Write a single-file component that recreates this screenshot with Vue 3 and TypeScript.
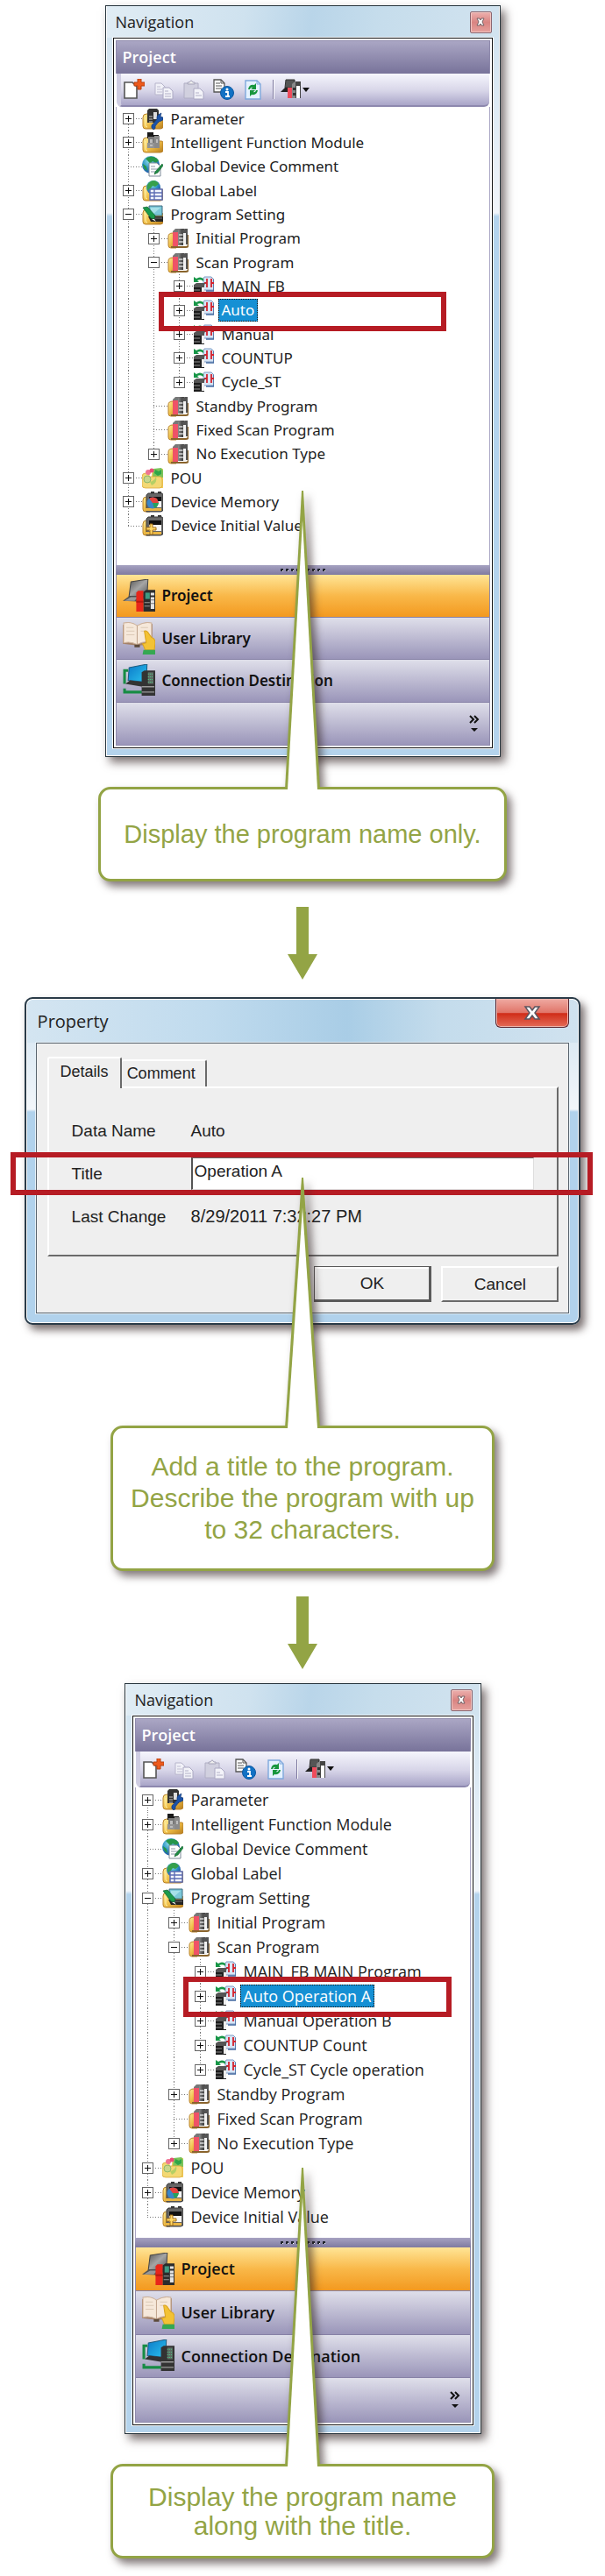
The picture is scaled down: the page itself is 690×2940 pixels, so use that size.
<script setup lang="ts">
interface TreeRow {
  label: string
  icon: string
  depth: number
  toggle?: '+' | '-'
  first?: boolean
  last?: boolean
  selected?: boolean
}

interface Step {
  id: string
  kind: 'navigation' | 'property'
  rows: TreeRow[]
  lines: string[]
  pointer: number
}

function buildRows(titles: string[], standbyToggle?: '+'): TreeRow[] {
  const programs: TreeRow[] = titles.map((label, i) => ({
    label,
    icon: 'program',
    depth: 2,
    toggle: '+',
    selected: i === 1,
    last: i === titles.length - 1,
  }))
  return [
    { label: 'Parameter', icon: 'parameter', depth: 0, toggle: '+', first: true },
    { label: 'Intelligent Function Module', icon: 'module', depth: 0, toggle: '+' },
    { label: 'Global Device Comment', icon: 'comment', depth: 0 },
    { label: 'Global Label', icon: 'label', depth: 0, toggle: '+' },
    { label: 'Program Setting', icon: 'setting', depth: 0, toggle: '-' },
    { label: 'Initial Program', icon: 'books', depth: 1, toggle: '+' },
    { label: 'Scan Program', icon: 'books', depth: 1, toggle: '-' },
    ...programs,
    { label: 'Standby Program', icon: 'books', depth: 1, toggle: standbyToggle },
    { label: 'Fixed Scan Program', icon: 'books', depth: 1 },
    { label: 'No Execution Type', icon: 'books', depth: 1, toggle: '+', last: true },
    { label: 'POU', icon: 'pou', depth: 0, toggle: '+' },
    { label: 'Device Memory', icon: 'memory', depth: 0, toggle: '+' },
    { label: 'Device Initial Value', icon: 'initial', depth: 0, last: true },
  ]
}

const steps: Step[] = [
  {
    id: 'before',
    kind: 'navigation',
    rows: buildRows(['MAIN_FB', 'Auto', 'Manual', 'COUNTUP', 'Cycle_ST']),
    lines: ['Display the program name only.'],
    pointer: 341,
  },
  {
    id: 'edit',
    kind: 'property',
    rows: [],
    lines: ['Add a title to the program.', 'Describe the program with up', 'to 32 characters.'],
    pointer: 286,
  },
  {
    id: 'after',
    kind: 'navigation',
    rows: buildRows(
      ['MAIN_FB MAIN Program', 'Auto Operation A', 'Manual Operation B', 'COUNTUP Count', 'Cycle_ST Cycle operation'],
      '+',
    ),
    lines: ['Display the program name', 'along with the title.'],
    pointer: 341,
  },
]

const tools = [
  { icon: 'new', name: 'New' },
  { icon: 'copy', name: 'Copy' },
  { icon: 'paste', name: 'Paste' },
  { icon: 'info', name: 'Property' },
  { icon: 'refresh', name: 'Refresh' },
]

const views = [
  { icon: 'nav-project', name: 'Project' },
  { icon: 'nav-library', name: 'User Library' },
  { icon: 'nav-connection', name: 'Connection Destination' },
]
</script>

<template>
  <svg class="sprite" aria-hidden="true">
    <defs>
      <linearGradient id="gold" x1="0" y1="0" x2="1" y2="1">
        <stop offset="0" stop-color="#fff0a0" /><stop offset=".5" stop-color="#f0c04a" /><stop offset="1" stop-color="#b87d1c" />
      </linearGradient>
      <linearGradient id="steel" x1="0" y1="0" x2="1" y2="0">
        <stop offset="0" stop-color="#8d8d8d" /><stop offset=".5" stop-color="#5a5a5a" /><stop offset="1" stop-color="#2e2e2e" />
      </linearGradient>
      <radialGradient id="globe" cx=".4" cy=".3" r=".8">
        <stop offset="0" stop-color="#8fe0e8" /><stop offset=".5" stop-color="#2a8fc4" /><stop offset="1" stop-color="#1b3f94" />
      </radialGradient>
      <linearGradient id="screen" x1="0" y1="0" x2="1" y2="1">
        <stop offset="0" stop-color="#0b78c8" /><stop offset="1" stop-color="#2cc4ee" />
      </linearGradient>
      <linearGradient id="lid" x1="0" y1="0" x2="1" y2="1">
        <stop offset="0" stop-color="#555" /><stop offset=".5" stop-color="#a5a5a5" /><stop offset="1" stop-color="#555" />
      </linearGradient>
      <symbol id="folder" viewBox="0 0 24 24">
        <path d="M1 10q0-4 4-4h3v4h14q2 0 2 2v8q0 3-3 3H4q-3 0-3-3z" fill="url(#gold)" stroke="#b9822a" />
        <path d="M4 10v9q0 2 2 2" fill="none" stroke="#fff2b0" />
      </symbol>
      <symbol id="parameter" viewBox="0 0 24 24">
        <use href="#folder" />
        <path d="M6 2l2-2h9l2 2v14H6z" fill="#333" />
        <path d="M8 9h4M8 12h4M8 15h4" stroke="#ccc" stroke-width="1" />
        <path d="M13 4h4v8h-4z" fill="#ddd" />
        <path d="M11 22q-1-4 2-5l4-5q-1-4 3-6l2-1-1 4 3 1q1 3-2 4l-3 1-4 5q1 3-2 4z" fill="#1b52a8" stroke="#123874" stroke-width=".6" />
      </symbol>
      <symbol id="module" viewBox="0 0 24 24">
        <use href="#folder" />
        <path d="M6 0h7v3h6v4H6z" fill="#181818" />
        <path d="M7 5h11v13H7z" fill="#777" />
        <path d="M6 12h8v6H6z" fill="#949494" /><path d="M14 4h6v14h-6z" fill="#8a8a8a" />
        <path d="M9 8h3v4H9zm7 0h2v4h-2zM9 14h3v2H9z" fill="#bdbdbd" />
      </symbol>
      <symbol id="comment" viewBox="0 0 24 24">
        <circle cx="10" cy="10" r="10" fill="url(#globe)" />
        <path d="M4 3q4-3 9-2 4 1 6 4l-3 3-4-2-3 3-2-3z" fill="#25964a" /><path d="M1 9l4 3 1 5Q1 14 1 9z" fill="#25964a" />
        <path d="M8 8h9l4 4v11H8z" fill="#fff" stroke="#7d8998" />
        <path d="M10 12h5M10 15h8M10 18h8" stroke="#8c98a8" />
        <path d="M23 9l-8 9-1 3 4-2 6-8z" fill="#1f8c44" stroke="#0e5c2a" stroke-width=".6" />
      </symbol>
      <symbol id="label" viewBox="0 0 24 24">
        <use href="#folder" />
        <circle cx="13" cy="8" r="8" fill="url(#globe)" />
        <path d="M6 5q3-5 8-5 4 1 5 4l-4 3-3-1-3 4-3 1z" fill="#35a04c" />
        <path d="M9 10h14v12H9z" fill="#f4f8ff" stroke="#5c6cb4" stroke-width="1.5" />
        <path d="M9 14h14M9 18h14M14 10v12" stroke="#5c6cb4" stroke-width="1.4" />
      </symbol>
      <symbol id="setting" viewBox="0 0 24 24">
        <use href="#folder" />
        <path d="M8 2h15v11H8z" fill="#7cc8d8" stroke="#3c6b80" />
        <path d="M10 4h11L12 12h-2z" fill="#a6e0e8" />
        <path d="M7 14h17v6H10z" fill="#252525" /><path d="M11 16h12" stroke="#777" />
        <path d="M1 4l5-1 9 10-1 4-4-1z" fill="#1a9a4c" stroke="#0b5e2c" stroke-width=".7" />
        <path d="M14 17l2 3-5-3z" fill="#eee" />
      </symbol>
      <symbol id="books" viewBox="0 0 24 24">
        <path d="M1 10q0-4 5-4h4v17H4q-3 0-3-3z" fill="url(#gold)" stroke="#b9822a" />
        <path d="M4 22h17q3 0 3-3V8" fill="none" stroke="#8a642c" stroke-width="2" />
        <path d="M6 4l3-3h5v19H6z" fill="#777" /><path d="M6 5h6v16H6z" fill="#ef5267" />
        <path d="M12 3l2-2h5v19h-7z" fill="url(#steel)" />
        <path d="M13 8h5M13 12h5M13 16h5" stroke="#d9d9d9" stroke-width="1.5" />
        <path d="M17 2l3-1h3v18h-5z" fill="#555" /><path d="M18 6h3v14h-3z" fill="#f2f2f2" />
      </symbol>
      <symbol id="program" viewBox="0 0 24 24">
        <path d="M13 1h8l3 3v12H12V3z" fill="#d7e5f5" stroke="#7d9ac4" />
        <path d="M24 4v13h-9" fill="none" stroke="#4168a0" stroke-width="1.5" />
        <path d="M13 8h3M21 8h3M16 3v10M21 3v10" stroke="#d3232f" stroke-width="1.800" />
        <path d="M1 1v6h6L5 5q4-2 7 1V3Q8 0 4 3z" fill="#179647" />
        <path d="M1 10l3-2h10l-1 3v12H1z" fill="#555" />
        <path d="M1 14h7M1 18h7M1 22h7" stroke="#1b1b1b" stroke-width="2" />
        <path d="M8 13h5v10H8z" fill="#222" /><path d="M10 13h3v9h-3z" fill="#eee" />
      </symbol>
      <symbol id="pou" viewBox="0 0 24 24">
        <path d="M12 1h12v22H9z" fill="#f4d05c" /><path d="M13 1l9-1 2 3v8H12z" fill="#7cc45a" />
        <path d="M15 2l4 2 3-2v5l-4 2-4-3z" fill="#2fa548" />
        <path d="M0 10q0-4 4-4h4v4h12q3 0 3 3v7q0 3-3 3H4q-4 0-4-3z" fill="#f3d873" stroke="#dda93c" stroke-width=".8" />
        <circle cx="7" cy="5" r="3" fill="#ef7594" /><circle cx="11" cy="3" r="2.500" fill="#e84d78" />
        <circle cx="6" cy="13" r="4" fill="#c8d68b" stroke="#8fb86b" /><path d="M9 16q5-1 7-6 2 7-5 10z" fill="#b4cf65" />
      </symbol>
      <symbol id="battery" viewBox="0 0 24 24">
        <path d="M1 10q0-4 4-4h4v17H4q-3 0-3-3z" fill="url(#gold)" stroke="#b9822a" />
        <path d="M10 0h4v3h-4zm8 0h4v3h-4z" fill="#333" />
        <path d="M7 2h16l1 2v16q0 3-3 3H5V4z" fill="#666" stroke="#3c3c3c" /><path d="M8 7h14v11H8z" fill="#f5f5f5" />
        <path d="M8 6h14v5H8z" fill="#111" /><path d="M3 19h19v3H4z" fill="#e9b544" />
      </symbol>
      <symbol id="memory" viewBox="0 0 24 24">
        <use href="#battery" />
        <circle cx="12" cy="13" r="6.500" fill="#3b86c8" />
        <path d="M12 13L8 8q4-3 9 0l2 5z" fill="#e2443e" /><path d="M12 13l7 0q-1 5-5 6z" fill="#29a15a" />
      </symbol>
      <symbol id="initial" viewBox="0 0 24 24">
        <use href="#battery" />
        <path d="M9 10h3v4h4v3h-4v5H9v-5H5v-3h4z" fill="#ffd866" stroke="#a36f18" />
      </symbol>
      <symbol id="new" viewBox="0 0 24 24">
        <path d="M1 4h9l5 5v13H1z" fill="#fff" stroke="#555" stroke-width="1.6" />
        <path d="M16 0h4v4h4v4h-4v4h-4V8h-4V4h4z" fill="#ee5a1c" stroke="#b8400e" />
      </symbol>
      <symbol id="copy" viewBox="0 0 24 24">
        <path d="M2 5h7l4 4v9H2z" fill="#f1f1f8" stroke="#b7b5cb" /><path d="M4 9h4M4 12h6M4 15h6" stroke="#bdbbd0" />
        <path d="M11 10h7l4 4v9H11z" fill="#f3f3f9" stroke="#aaa8c2" /><path d="M13 14h4M13 17h7M13 20h7" stroke="#b1afc6" />
      </symbol>
      <symbol id="paste" viewBox="0 0 24 24">
        <path d="M1 5h16v17H1z" fill="#d1d0df" stroke="#b0aec4" /><path d="M5 6V4h2q2-4 4 0h2v2z" fill="#eee" stroke="#a5a3b9" />
        <path d="M12 11h7l4 4v8H12z" fill="#f3f3f9" stroke="#aaa8c2" /><path d="M14 16h4M14 19h7" stroke="#b1afc6" />
      </symbol>
      <symbol id="info" viewBox="0 0 24 24">
        <path d="M1 1h8l4 4v10H1z" fill="#fff" stroke="#555" stroke-width="1.300" /><path d="M3 5h5M3 8h7M3 11h7M9 1v4h4" fill="none" stroke="#555" />
        <circle cx="16" cy="16" r="7.500" fill="#1271c4" stroke="#0d58a0" />
        <circle cx="16" cy="12" r="1.500" fill="#fff" /><path d="M14 15h3v5m-3 0h5" fill="none" stroke="#fff" stroke-width="1.800" />
      </symbol>
      <symbol id="refresh" viewBox="0 0 24 24">
        <path d="M3 2h13l4 4v17H3z" fill="#e4f1ff" stroke="#7fa8dc" stroke-width="1.400" /><path d="M16 2v4h4" fill="none" stroke="#7fa8dc" />
        <path d="M6 12q1-6 7-5l2-2v7H9l2-2q-2-1-3 2z" fill="#16963d" /><path d="M17 13q-1 6-7 5l-2 2v-7h6l-2 2q2 1 3-2z" fill="#16963d" />
      </symbol>
      <symbol id="plc" viewBox="0 0 24 24">
        <path d="M6 1h10v9H5z" fill="#555" stroke="#333" /><path d="M0 15l5-5h8v5z" fill="#222" />
        <path d="M8 10h5v12H8z" fill="#ee4c5c" /><path d="M13 6l2-2h5v18h-7z" fill="#888" />
        <path d="M14 10h3v3h-3zm0 6h3v3h-3z" fill="#333" /><path d="M17 3h6v19h-6z" fill="#444" /><path d="M18 8h4v14h-4z" fill="#fff" />
      </symbol>
      <symbol id="nav-project" viewBox="0 0 36 36">
        <path d="M9 3l19-3-1 19H7z" fill="url(#lid)" stroke="#444" /><path d="M0 24l7-5h17l-2 6z" fill="#555" /><path d="M2 24l7-4h8l-4 4z" fill="#999" />
        <path d="M15 15l2-2h6v23h-8z" fill="#e8261a" /><path d="M15 24h8v2h-8z" fill="#b81a10" />
        <path d="M23 14l3-2h10v24H23z" fill="#2c2c2c" /><path d="M25 15h5v7h-5z" fill="#3e9a82" /><path d="M24 26h6M24 30h6" stroke="#999" />
        <path d="M31 15h4v3h-4zm0 5h4v13h-4z" fill="#e4e4e4" /><path d="M31 23h4M31 27h4" stroke="#777" />
      </symbol>
      <symbol id="nav-library" viewBox="0 0 36 36">
        <path d="M0 3l16 3 17-4v23l-17 1-16-2z" fill="#a48168" />
        <path d="M1 1q9-2 15 3 8-5 16-3v21q-10-1-16 3-7-4-15-2z" fill="#f6e8da" stroke="#cdb29c" /><path d="M16 4v21" stroke="#c0a48c" />
        <path d="M4 6h8M4 10h9M4 14h9M20 6h8M20 10h6" stroke="#dcc9b6" /><path d="M13 25h6v3h-6z" fill="#5c4a3a" />
        <path d="M24 10q3-1 5 3l3 4q4 1 4 6l-1 8H25l-3-7 4-1z" fill="#f3c234" stroke="#dba41e" /><path d="M23 31h13v5H22z" fill="#35a852" />
      </symbol>
      <symbol id="nav-connection" viewBox="0 0 36 36">
        <path d="M6 7H2v15M2 27v4h21" fill="none" stroke="#178c44" stroke-width="3" />
        <path d="M7 4l20-4-1 20-20-2z" fill="url(#screen)" stroke="#1d5d80" /><path d="M3 22l5-4 16 2-2 5z" fill="#333" />
        <path d="M21 9l3-2h12v28H21z" fill="#333" /><path d="M28 9h6v13h-6z" fill="#5c6b62" />
        <path d="M28 11h6M28 14h6M28 17h6M28 20h6" stroke="#52c987" stroke-dasharray="1 1" />
        <path d="M21 25h14M21 31h14" stroke="#9a9a9a" stroke-width="1.400" />
      </symbol>
    </defs>
  </svg>

  <main class="page">
    <section v-for="(step, n) in steps" :key="step.id" class="step" :class="step.id">
      <div v-if="step.kind === 'navigation'" class="dock">
        <header class="dock-title">
          <span>Navigation</span>
          <button class="dock-close" type="button" aria-label="Close navigation">
            <svg viewBox="0 0 12 12" aria-hidden="true"><path d="M2 2h3l1 2 1-2h3L8 6l2 4H7L6 8l-1 2H2l2-4z" fill="#fff" stroke="#756064" /></svg>
          </button>
        </header>
        <div class="dock-body">
          <h2 class="heading">Project</h2>
          <div class="toolbar">
            <button v-for="tool in tools" :key="tool.icon" class="tool" type="button" :aria-label="tool.name">
              <svg aria-hidden="true"><use :href="'#' + tool.icon" /></svg>
            </button>
            <span class="divider"></span>
            <button class="tool view-tool" type="button" aria-label="Change view">
              <svg aria-hidden="true"><use href="#plc" /></svg>
              <span class="caret"></span>
            </button>
          </div>
          <ul class="tree">
            <li v-for="row in step.rows" :key="row.label" class="row">
              <span v-for="d in row.depth" :key="d" class="guide"></span>
              <span class="branch" :class="{ first: row.first, last: row.last }">
                <button v-if="row.toggle" class="toggle" :class="{ open: row.toggle === '-' }" type="button" :aria-label="'Toggle ' + row.label"></button>
              </span>
              <svg class="row-icon" aria-hidden="true"><use :href="'#' + row.icon" /></svg>
              <span class="row-label" :class="{ selected: row.selected }">{{ row.label }}</span>
              <span v-if="row.selected" class="highlight"></span>
            </li>
          </ul>
          <div class="splitter"><i v-for="k in 9" :key="k"></i></div>
          <nav class="views">
            <button v-for="(view, i) in views" :key="view.name" class="view" :class="{ active: i === 0 }" type="button">
              <svg aria-hidden="true"><use :href="'#' + view.icon" /></svg>
              <span>{{ view.name }}</span>
            </button>
            <div class="view more">
              <button class="more-button" type="button" aria-label="More views">
                <svg viewBox="0 0 12 20" aria-hidden="true">
                  <path d="M1 1l4 4-4 4M6 1l4 4-4 4" fill="none" stroke="#111" stroke-width="2" /><path d="M2 15h8l-4 4z" fill="#111" />
                </svg>
              </button>
            </div>
          </nav>
        </div>
      </div>

      <form v-else class="dialog" @submit.prevent>
        <header class="dialog-title">
          <span>Property</span>
          <button class="dialog-close" type="button" aria-label="Close">
            <svg viewBox="0 0 20 18" aria-hidden="true"><path d="M2 2h5l3 4 3-4h5l-5 7 5 7h-5l-3-4-3 4H2l5-7z" fill="#fff" stroke="#5b5560" stroke-width="1.500" /></svg>
          </button>
        </header>
        <div class="dialog-body">
          <div class="tabs">
            <button class="tab current" type="button">Details</button>
            <button class="tab" type="button">Comment</button>
          </div>
          <div class="sheet">
            <div class="field"><span>Data Name</span><span>Auto</span></div>
            <div class="field">
              <label for="title">Title</label>
              <input id="title" type="text" value="Operation A" maxlength="32" />
              <span class="highlight wide"></span>
            </div>
            <div class="field"><span>Last Change</span><time>8/29/2011 7:32:27 PM</time></div>
          </div>
          <div class="actions">
            <button class="action default" type="submit">OK</button>
            <button class="action" type="button">Cancel</button>
          </div>
        </div>
      </form>

      <div class="callout">
        <svg class="pointer" width="40" :height="step.pointer" :viewBox="`0 0 40 ${step.pointer}`" aria-hidden="true">
          <path :d="`M0 ${step.pointer}L19 0H21L40 ${step.pointer}z`" fill="#93a445" />
          <path :d="`M3 ${step.pointer}L20 34L37 ${step.pointer}z`" fill="#fff" />
        </svg>
        <p><span v-for="line in step.lines" :key="line">{{ line }}</span></p>
      </div>

      <svg v-if="n < steps.length - 1" class="arrow" viewBox="0 0 34 83" aria-hidden="true">
        <path d="M10 0h14v54h10L17 83 0 54h10z" fill="#93a445" />
      </svg>
    </section>
  </main>
</template>

<style>
body {
  margin: 0;
  background: #fff;
}
</style>

<style scoped>
* {
  box-sizing: border-box;
}
button {
  margin: 0;
  padding: 0;
  border: 0;
  background: none;
  color: inherit;
  font: inherit;
}
.sprite {
  position: absolute;
  width: 0;
  height: 0;
}
.page {
  padding: 6px 0 20px;
  color: #222;
  font-family: "Noto Sans", "Open Sans", sans-serif;
}
.step {
  display: flex;
  flex-direction: column;
  align-items: center;
}
.before {
  --dock: 451px;
  --indent: 29px;
  --text: 17px;
  --tool-gap: 10px;
  --bar: 38px;
  --tree: 492px;
  --tree-end: 31px;
  --views: 195px;
  --mark-left: 48px;
  --mark-right: 49px;
}
.after {
  --dock: 407px;
  --indent: 30px;
  --text: 18px;
  --tool-gap: 11px;
  --bar: 41px;
  --tree: 504px;
  --tree-end: 10px;
  --views: 200px;
  --mark-left: 54px;
  --mark-right: 21px;
  font-family: "Open Sans", "Noto Sans", sans-serif;
}

/* Docked navigation window */
.dock {
  width: min(100%, var(--dock));
  padding: 0 8px 9px;
  border: 1px solid #26343c;
  background: linear-gradient(#cde1ef, #f1f5fa 236px, #b4d3ec 240px);
  box-shadow: inset 0 0 0 1px #fff, 5px 6px 10px rgba(50, 35, 35, 0.65);
}
.dock-title {
  display: flex;
  align-items: center;
  justify-content: space-between;
  height: 36px;
  margin: 0 -7px;
  padding: 0 8px 0 10px;
  background: linear-gradient(100deg, #e0ecf4, #cfe2ef 35%, #b9d5e9 52%, #c6ddec 70%, #d2e3ef);
  color: #222;
  font-family: "Open Sans", "Noto Sans", sans-serif;
  font-size: 18px;
}
.dock-close {
  display: grid;
  place-items: center;
  width: 25px;
  height: 25px;
  border: 1px solid #8a6670;
  border-radius: 2px;
  background: linear-gradient(#edb0ae, #d98482 50%, #e6a19d);
  box-shadow: inset 0 0 0 1px #f2c4c0;
}
.dock-close svg {
  width: 12px;
  height: 12px;
}
.dock-body {
  padding: 2px;
  border: 1px solid #151515;
  outline: 1px solid #f4f8fb;
  background: #fff;
}
.heading {
  height: 38px;
  margin: 0;
  padding: 0 7px;
  border: 1px solid #8f8aac;
  border-bottom: 0;
  background: linear-gradient(#aaa6c4, #78739a);
  color: #fff;
  font-family: "Open Sans", "Noto Sans", sans-serif;
  font-size: 18px;
  font-weight: 600;
  line-height: 36px;
}
.toolbar {
  display: flex;
  align-items: center;
  gap: var(--tool-gap);
  height: var(--bar);
  margin: 0 1px;
  padding-left: 3px;
  border-left: 5px solid #cfcde2;
  border-bottom: 2px solid #8d88ae;
  border-radius: 0 0 6px 6px;
  background: linear-gradient(#f6f6fd, #d7d5e8 55%, #a9a5c8);
}
.tool {
  display: flex;
  align-items: center;
  gap: 1px;
}
.tool svg {
  width: 24px;
  height: 24px;
}
.divider {
  width: 2px;
  height: 22px;
  margin-right: -3px;
  border-left: 1px solid #7c779e;
  background: #fff;
}
.caret {
  border: 4px solid transparent;
  border-top: 5px solid #111;
  border-bottom: 0;
}

/* Project tree */
.tree {
  display: grid;
  grid-auto-rows: 1fr;
  min-height: calc(var(--tree) + var(--tree-end));
  margin: 0;
  padding: 0 0 var(--tree-end);
  border: solid #aaa6c4;
  border-width: 0 1px;
  list-style: none;
  font-size: var(--text);
  line-height: 24px;
}
.row {
  position: relative;
  display: flex;
  align-items: center;
  white-space: nowrap;
}
.guide,
.branch {
  --dots: repeating-linear-gradient(#777 0 1px, transparent 1px 3px);
  flex: none;
  align-self: stretch;
  width: var(--indent);
  background: var(--dots) 13px 0 / 1px 100% no-repeat;
}
.branch {
  display: flex;
  align-items: center;
  padding-left: 7px;
  background:
    repeating-linear-gradient(90deg, #777 0 1px, transparent 1px 3px) 13px 50% / 100% 1px no-repeat,
    var(--dots) 13px 0 / 1px 100% no-repeat;
}
.branch.first {
  background-position: 13px 50%, 13px 14px;
}
.branch.last {
  background-size: 100% 1px, 1px 50%;
}
.toggle {
  width: 13px;
  height: 13px;
  border: 1px solid #666;
  background:
    linear-gradient(#111, #111) center / 7px 1px no-repeat,
    linear-gradient(#111, #111) center / 1px 7px no-repeat,
    #fff;
}
.toggle.open {
  background: linear-gradient(#111, #111) center / 7px 1px no-repeat, #fff;
}
.row-icon {
  flex: none;
  width: 24px;
  height: 24px;
}
.row-label {
  margin-left: 5px;
  padding: 0 4px;
  line-height: 26px;
}
.row-label.selected {
  outline: 1px dotted #111;
  outline-offset: -1px;
  background: #1690d4;
  color: #fff;
}
.highlight {
  position: absolute;
  z-index: 1;
  inset: -8px var(--mark-right) -10px var(--mark-left);
  border: 6px solid #b61c24;
  pointer-events: none;
}

/* View switcher */
.splitter {
  display: flex;
  align-items: center;
  justify-content: center;
  gap: 3px;
  height: 11px;
  background: linear-gradient(#a6a2c1, #7f7aa0);
}
.splitter i {
  width: 3px;
  height: 3px;
  border: solid #20242c;
  border-width: 2px 0 0 2px;
  background: #fff;
}
.views {
  display: grid;
  grid-auto-rows: 1fr;
  min-height: var(--views);
  border: 1px solid #8f8aac;
  border-top: 0;
}
.view {
  display: flex;
  align-items: center;
  gap: 8px;
  padding: 0 7px;
  border-bottom: 1px solid #8681a6;
  background: linear-gradient(#dfdfea, #9a95b9);
  color: #111;
  font-size: var(--text);
  font-weight: 600;
  text-align: left;
  white-space: nowrap;
}
.view.active {
  background: linear-gradient(#ffe596, #f9b849 50%, #f3991f);
}
.view svg {
  flex: none;
  width: 37px;
  height: 37px;
}
.view.more {
  justify-content: flex-end;
  border-bottom: 0;
}
.more-button {
  display: flex;
  margin-right: 4px;
}
.view .more-button svg {
  width: 12px;
  height: 20px;
}

/* Property dialog */
.dialog {
  width: min(92%, 636px);
  padding: 0 11px 11px;
  border: 2px solid #2a3b48;
  border-radius: 9px;
  background: linear-gradient(90deg, #d4e5f1, #c0dbee 33%, #a9cde6 58%, #c4dcec 75%, #d0e2ef) 0 0 / 100% 50px no-repeat,
    linear-gradient(#cfe2f0, #f2f6fa 126px, #b1d2ec 129px);
  box-shadow: inset 0 0 0 1px #fff, 5px 6px 10px rgba(50, 35, 35, 0.65);
  color: #222;
  font-family: "Liberation Sans", Arial, sans-serif;
  font-size: 19px;
}
.dialog-title {
  display: flex;
  align-items: center;
  justify-content: space-between;
  height: 50px;
  padding-left: 2px;
  font-family: "Open Sans", "Noto Sans", sans-serif;
  font-size: 20px;
}
.dialog-close {
  display: grid;
  place-items: center;
  align-self: flex-start;
  width: 84px;
  height: 33px;
  border: 1px solid #5a2630;
  border-top: 0;
  border-radius: 0 0 6px 6px;
  background: linear-gradient(#efaaa2, #e07468 50%, #d02c18 52%, #e46c58);
  box-shadow: inset 0 0 0 1px #f0b4ac;
}
.dialog-close svg {
  width: 20px;
  height: 18px;
}
.dialog-body {
  padding: 15px 11px 12px 12px;
  border: 1px solid #59646e;
  outline: 1px solid #e6f1f8;
  background: #efefef;
}
.tabs {
  display: flex;
  align-items: flex-end;
  font-size: 18px;
}
.tab {
  height: 31px;
  padding: 0 11px 0 6px;
  border: solid;
  border-width: 2px 2px 0 0;
  border-color: #fff #6a6a6a #fff #fff;
  border-radius: 3px 3px 0 0;
}
.tab.current {
  position: relative;
  height: 36px;
  margin-bottom: -2px;
  padding: 0 13px 4px;
  border-left-width: 2px;
  background: #efefef;
}
.sheet {
  padding: 24px 26px 19px;
  border: 2px solid;
  border-color: #fff #6a6a6a #6a6a6a #fff;
}
.field {
  position: relative;
  display: grid;
  grid-template-columns: 136px 1fr;
  align-items: center;
  height: 49px;
}
.field time {
  font-size: 20px;
}
.field input {
  width: 100%;
  height: 37px;
  padding: 0 2px 6px;
  border: 1px solid #ddd;
  border-top-color: #666;
  border-left: 2px solid #555;
  background: #fff;
  color: inherit;
  font: inherit;
}
.highlight.wide {
  inset: 0 -67px 0 -70px;
}
.actions {
  display: flex;
  justify-content: flex-end;
  gap: 11px;
  margin-top: 11px;
}
.action {
  width: 134px;
  height: 41px;
  border: 2px solid;
  border-color: #fff #6a6a6a #6a6a6a #fff;
}
.action.default {
  border-width: 1px 3px 3px 1px;
  border-color: #5a5a5a;
  box-shadow: inset 2px 2px #fff;
}

/* Explanation bubbles */
.callout {
  position: relative;
  z-index: 2;
  display: grid;
  place-items: center;
  width: min(100%, 438px);
  min-height: 108px;
  margin-top: 34px;
  border: 3px solid #93a445;
  border-radius: 14px;
  background: #fff;
  color: #93a445;
  filter: drop-shadow(5px 6px 5px rgba(50, 35, 35, 0.6));
  font-family: "Liberation Sans", Arial, sans-serif;
  font-size: 30px;
  line-height: 33px;
  text-align: center;
}
.callout p {
  margin: 0;
}
.callout p span {
  display: block;
}
.before .callout {
  width: min(100%, 466px);
  font-size: 29px;
}
.edit .callout {
  min-height: 166px;
  margin-top: 115px;
  line-height: 36px;
}
.pointer {
  position: absolute;
  bottom: 100%;
  left: 50%;
  margin: 0 0 0 -20px;
}
.arrow {
  width: 34px;
  height: 83px;
  margin: 29px 0 20px;
}
.edit .arrow {
  margin-bottom: 16px;
}
</style>
